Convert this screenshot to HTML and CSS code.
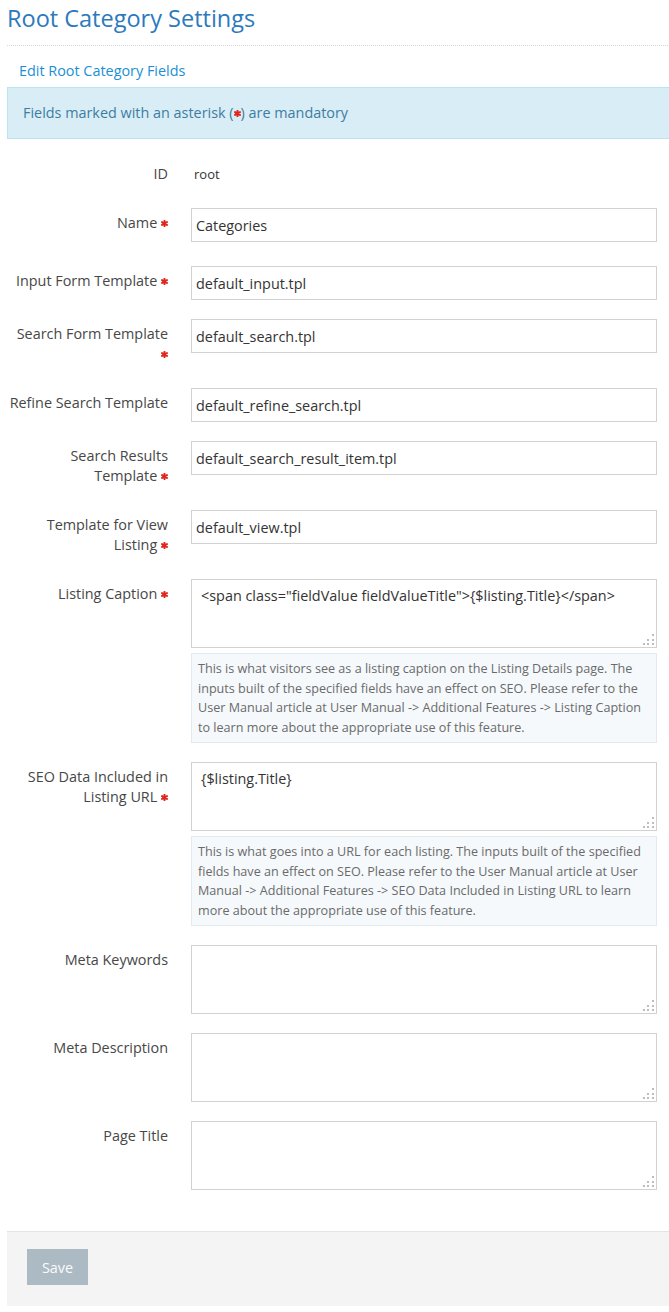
FILE: index.html
```html
<!DOCTYPE html>
<html lang="en">
<head>
<meta charset="utf-8">
<title>Root Category Settings</title>
<link rel="stylesheet" href="styles.css">
</head>
<body>
<div class="page">
  <h1 class="page-title">Root Category Settings</h1>
  <div class="subtitle">Edit Root Category Fields</div>
  <div class="info-box">Fields marked with an asterisk (<svg class="req" viewBox="0 0 8 8"><path d="M4 0.8V7.2M1.2 2.4L6.8 5.6M1.2 5.6L6.8 2.4"/></svg>) are mandatory</div>

  <form class="form">
    <div class="row">
      <label class="label">ID</label>
      <div class="value">root</div>
    </div>
    <div class="row row-name">
      <label class="label">Name <svg class="req" viewBox="0 0 8 8"><path d="M4 0.8V7.2M1.2 2.4L6.8 5.6M1.2 5.6L6.8 2.4"/></svg></label>
      <div class="field"><input class="input" type="text" value="Categories"></div>
    </div>
    <div class="row">
      <label class="label">Input Form Template <svg class="req" viewBox="0 0 8 8"><path d="M4 0.8V7.2M1.2 2.4L6.8 5.6M1.2 5.6L6.8 2.4"/></svg></label>
      <div class="field"><input class="input" type="text" value="default_input.tpl"></div>
    </div>
    <div class="row">
      <label class="label">Search Form Template<br><svg class="req" viewBox="0 0 8 8"><path d="M4 0.8V7.2M1.2 2.4L6.8 5.6M1.2 5.6L6.8 2.4"/></svg></label>
      <div class="field"><input class="input" type="text" value="default_search.tpl"></div>
    </div>
    <div class="row">
      <label class="label">Refine Search Template</label>
      <div class="field"><input class="input" type="text" value="default_refine_search.tpl"></div>
    </div>
    <div class="row">
      <label class="label">Search Results<br>Template <svg class="req" viewBox="0 0 8 8"><path d="M4 0.8V7.2M1.2 2.4L6.8 5.6M1.2 5.6L6.8 2.4"/></svg></label>
      <div class="field"><input class="input" type="text" value="default_search_result_item.tpl"></div>
    </div>
    <div class="row">
      <label class="label">Template for View<br>Listing <svg class="req" viewBox="0 0 8 8"><path d="M4 0.8V7.2M1.2 2.4L6.8 5.6M1.2 5.6L6.8 2.4"/></svg></label>
      <div class="field"><input class="input" type="text" value="default_view.tpl"></div>
    </div>
    <div class="row">
      <label class="label">Listing Caption <svg class="req" viewBox="0 0 8 8"><path d="M4 0.8V7.2M1.2 2.4L6.8 5.6M1.2 5.6L6.8 2.4"/></svg></label>
      <div class="field">
        <div class="ta-wrap">
          <textarea class="textarea">&lt;span class="fieldValue fieldValueTitle"&gt;{$listing.Title}&lt;/span&gt;</textarea>
          <span class="grip"><i></i><i></i><i></i><i></i><i></i><i></i></span>
        </div>
        <div class="help">This is what visitors see as a listing caption on the Listing Details page. The inputs built of the specified fields have an effect on SEO. Please refer to the User Manual article at User Manual -&gt; Additional Features -&gt; Listing Caption to learn more about the appropriate use of this feature.</div>
      </div>
    </div>
    <div class="row">
      <label class="label">SEO Data Included in<br>Listing URL <svg class="req" viewBox="0 0 8 8"><path d="M4 0.8V7.2M1.2 2.4L6.8 5.6M1.2 5.6L6.8 2.4"/></svg></label>
      <div class="field">
        <div class="ta-wrap">
          <textarea class="textarea">{$listing.Title}</textarea>
          <span class="grip"><i></i><i></i><i></i><i></i><i></i><i></i></span>
        </div>
        <div class="help">This is what goes into a URL for each listing. The inputs built of the specified fields have an effect on SEO. Please refer to the User Manual article at User Manual -&gt; Additional Features -&gt; SEO Data Included in Listing URL to learn more about the appropriate use of this feature.</div>
      </div>
    </div>
    <div class="row">
      <label class="label">Meta Keywords</label>
      <div class="field">
        <div class="ta-wrap">
          <textarea class="textarea"></textarea>
          <span class="grip"><i></i><i></i><i></i><i></i><i></i><i></i></span>
        </div>
      </div>
    </div>
    <div class="row">
      <label class="label">Meta Description</label>
      <div class="field">
        <div class="ta-wrap">
          <textarea class="textarea"></textarea>
          <span class="grip"><i></i><i></i><i></i><i></i><i></i><i></i></span>
        </div>
      </div>
    </div>
    <div class="row">
      <label class="label">Page Title</label>
      <div class="field">
        <div class="ta-wrap">
          <textarea class="textarea"></textarea>
          <span class="grip"><i></i><i></i><i></i><i></i><i></i><i></i></span>
        </div>
      </div>
    </div>

    <div class="footer">
      <button class="btn-save" type="button">Save</button>
    </div>
  </form>
</div>
</body>
</html>
```

FILE: styles.css
```css
html, body {
  margin: 0;
  padding: 0;
  background: #fff;
  overflow-x: hidden;
}

body {
  font-family: "Open Sans", "Liberation Sans", sans-serif;
  font-size: 14.4px;
  color: #4a4a4a;
}

.page {
  margin: 0 -20px 0 7px;
}

.page-title {
  margin: 3px 21px 0 0;
  padding: 0 0 12px 0;
  font-size: 23.5px;
  line-height: 30px;
  font-weight: 400;
  color: #2c7abd;
  border-bottom: 1px dotted #d6d6d6;
}

.subtitle {
  margin-top: 15px;
  padding-left: 12px;
  line-height: 20px;
  font-size: 14.4px;
  color: #1a8fd5;
}

.info-box {
  margin-top: 6px;
  padding: 15px 15px;
  line-height: 20px;
  font-size: 14.4px;
  color: #3d7d9f;
  background: #d9edf7;
  border: 1px solid #bce4ef;
}

.req {
  display: inline-block;
  width: 7px;
  height: 7px;
  vertical-align: 1px;
}

.req path {
  stroke: #e3241b;
  stroke-width: 2.2;
  stroke-linecap: round;
  fill: none;
}

.form {
  margin-top: 20px;
}

.row {
  display: grid;
  grid-template-columns: 161px 1fr;
  column-gap: 23px;
  margin-bottom: 19px;
  padding-right: 32px;
}

.row-name {
  margin-bottom: 24px;
}

.label {
  text-align: right;
  padding: 5px 0;
  line-height: 20px;
  font-size: 14.4px;
  color: #474747;
  white-space: nowrap;
}

.value {
  padding: 5px 3px;
  line-height: 20px;
  font-size: 13px;
  color: #333;
}

.field {
  display: flex;
  flex-direction: column;
  gap: 5px;
}

.input {
  box-sizing: border-box;
  display: block;
  width: 100%;
  height: 34px;
  margin: 0;
  padding: 0 4px;
  border: 1px solid #d2d2d2;
  border-radius: 0;
  font-family: "Open Sans", "Liberation Sans", sans-serif;
  font-size: 14.4px;
  color: #333;
  background: #fff;
  outline: none;
}

.ta-wrap {
  position: relative;
}

.textarea {
  box-sizing: border-box;
  display: block;
  width: 100%;
  height: 69px;
  margin: 0;
  padding: 6px 10px 6px 9px;
  border: 1px solid #d2d2d2;
  border-radius: 0;
  font-family: "Open Sans", "Liberation Sans", sans-serif;
  font-size: 14.4px;
  line-height: 20px;
  color: #333;
  background: #fff;
  resize: none;
  outline: none;
  overflow: hidden;
}

.grip {
  position: absolute;
  right: 2px;
  bottom: 2px;
  width: 12px;
  height: 12px;
}

.grip i {
  position: absolute;
  width: 2px;
  height: 2px;
  background: #bdbdbd;
}

.grip i:nth-child(1) { right: 1px; top: 0; }
.grip i:nth-child(2) { right: 1px; top: 5px; }
.grip i:nth-child(3) { right: 6px; top: 5px; }
.grip i:nth-child(4) { right: 1px; top: 9px; }
.grip i:nth-child(5) { right: 6px; top: 9px; }
.grip i:nth-child(6) { right: 10px; top: 9px; }

.help {
  padding: 5px 6px;
  font-size: 12.6px;
  line-height: 19.5px;
  color: #6a6a6a;
  background: #f5f9fc;
  border: 1px solid #e2e9ef;
}

.footer {
  margin-top: 41px;
  padding: 17px 20px 21px;
  background: #f4f4f4;
  border-top: 1px solid #e4e4e4;
}

.btn-save {
  display: block;
  width: 61px;
  height: 36px;
  padding: 0;
  border: none;
  border-radius: 0;
  background: #abbac3;
  color: #fbfbfb;
  font-family: "Open Sans", "Liberation Sans", sans-serif;
  font-size: 14.4px;
  cursor: default;
}
```
